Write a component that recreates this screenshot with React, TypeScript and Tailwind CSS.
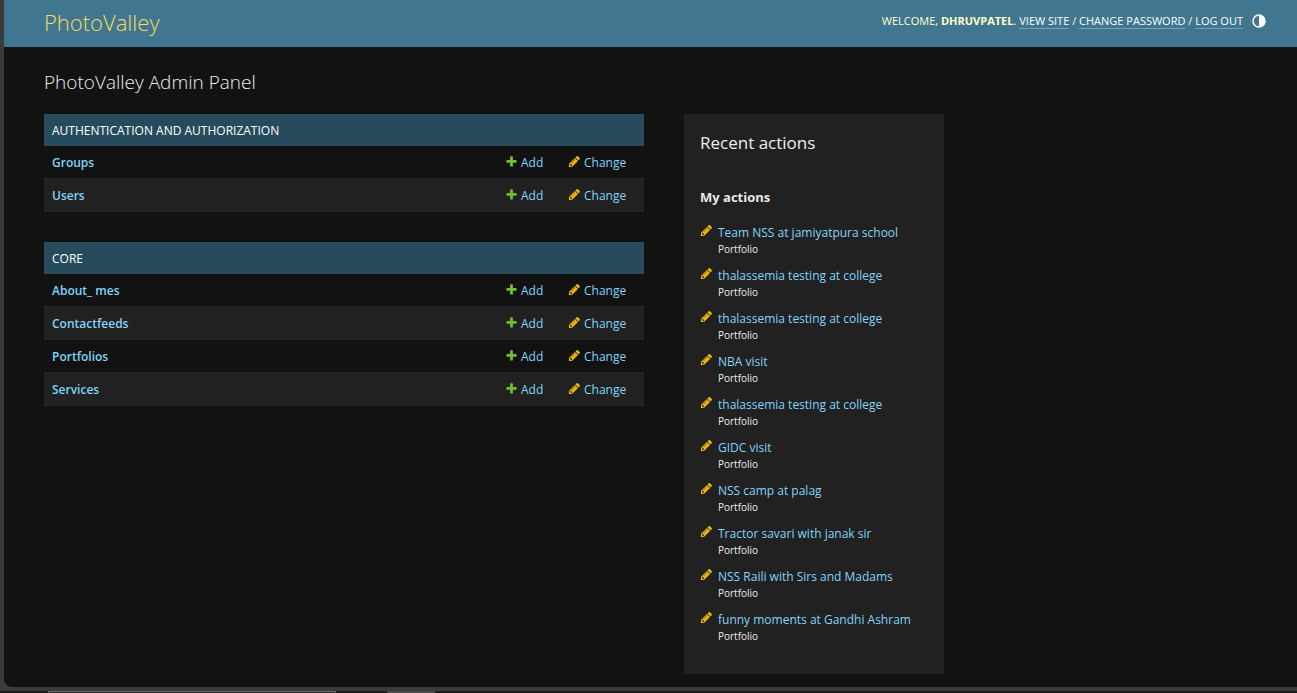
import React from "react";

type AppGroup = { name: string; models: string[] };

const groups: AppGroup[] = [
  { name: "Authentication and Authorization", models: ["Groups", "Users"] },
  { name: "Core", models: ["About_ mes", "Contactfeeds", "Portfolios", "Services"] },
];

const actions: string[] = [
  "Team NSS at jamiyatpura school",
  "thalassemia testing at college",
  "thalassemia testing at college",
  "NBA visit",
  "thalassemia testing at college",
  "GIDC visit",
  "NSS camp at palag",
  "Tractor savari with janak sir",
  "NSS Raili with Sirs and Madams",
  "funny moments at Gandhi Ashram",
];

function PlusIcon() {
  return (
    <svg className="size-[13px] shrink-0" viewBox="0 0 1792 1792" fill="#70bf2b" aria-hidden="true">
      <path d="M1600 796v192q0 40-28 68t-68 28h-416v416q0 40-28 68t-68 28h-192q-40 0-68-28t-28-68v-416h-416q-40 0-68-28t-28-68v-192q0-40 28-68t68-28h416v-416q0-40 28-68t68-28h192q40 0 68 28t28 68v416h416q40 0 68 28t28 68z" />
    </svg>
  );
}

function PencilIcon() {
  return (
    <svg className="size-[13px] shrink-0" viewBox="0 0 1792 1792" fill="#efb80b" aria-hidden="true">
      <path d="M491 1536l91-91-235-235-91 91v107h128v128h107zm523-928q0-22-22-22-10 0-17 7l-542 542q-7 7-7 17 0 22 22 22 10 0 17-7l542-542q7-7 7-17zm-54-192l416 416-832 832h-416v-416zm683 96q0 53-37 90l-166 166-416-416 166-165q36-38 90-38 53 0 91 38l235 234q37 39 37 91z" />
    </svg>
  );
}

function ThemeIcon() {
  return (
    <svg className="size-4" viewBox="0 0 16 16" aria-hidden="true">
      <circle cx="8" cy="8" r="6" fill="none" stroke="#fff" strokeWidth="1.5" />
      <path d="M8 2a6 6 0 0 1 0 12z" fill="#fff" />
    </svg>
  );
}

function Header() {
  const link = "border-b border-white/30 text-white";
  return (
    <header className="flex h-[47px] items-center justify-between bg-[#417690] pr-[30px] pl-10 text-[#ffc]">
      <a href="#home" className="pb-1 text-[22px] leading-8 font-light text-[#f5dd5d]">
        PhotoValley
      </a>
      <div className="flex items-center gap-2 pb-[5px] text-[11px] leading-[14px] uppercase">
        <div>
          Welcome, <strong className="font-bold">dhruvpatel</strong>.{" "}
          <a href="#site" className={link}>View site</a> /{" "}
          <a href="#password" className={link}>Change password</a> /{" "}
          <button type="button" className="border-b border-white/30 leading-[14px] text-white uppercase">Log out</button>
        </div>
        <button type="button" aria-label="Toggle theme">
          <ThemeIcon />
        </button>
      </div>
    </header>
  );
}

function Module({ group }: { group: AppGroup }) {
  return (
    <table className="w-full table-fixed border-separate border-spacing-0 text-left">
      <caption className="h-8 bg-[#264b5d] px-2 pt-0.5 text-left text-xs leading-[30px] text-white uppercase">
        {group.name}
      </caption>
      <colgroup>
        <col />
        <col className="w-[63px]" />
        <col className="w-[76px]" />
      </colgroup>
      <tbody>
        {group.models.map((model) => (
          <tr key={model} className="h-[33px] even:bg-[#212121]">
            <th scope="row" className="border-b border-[#272727] px-2 pt-0.5 font-semibold">
              <a href="#list">{model}</a>
            </th>
            <td className="border-b border-[#272727] pt-0.5">
              <a href="#add" className="flex items-center gap-[3px]">
                <span className="pb-1">
                  <PlusIcon />
                </span>
                Add
              </a>
            </td>
            <td className="border-b border-[#272727] pt-0.5">
              <a href="#change" className="flex items-center gap-[3px]">
                <span className="pb-1">
                  <PencilIcon />
                </span>
                Change
              </a>
            </td>
          </tr>
        ))}
      </tbody>
    </table>
  );
}

function RecentActions() {
  return (
    <aside className="w-[260px] shrink-0 bg-[#212121] pb-5">
      <h2 className="border-b border-[#272727] px-4 pt-[17px] pb-[15px] text-[17px] leading-6 text-[#eee]">Recent actions</h2>
      <h3 className="px-4 pt-[17px] pb-[18px] text-[13px] leading-[18px] font-bold text-[#e8e8e8]">My actions</h3>
      <ul className="px-4">
        {actions.map((title, i) => (
          <li key={i} className="flex h-[43px] gap-[5px]">
            <span>
              <PencilIcon />
            </span>
            <div className="whitespace-nowrap">
              <a href="#entry" className="block leading-[18px]">{title}</a>
              <span className="block text-[10px] leading-[14px] text-[#eee]">Portfolio</span>
            </div>
          </li>
        ))}
      </ul>
    </aside>
  );
}

export default function App() {
  return (
    <div className="flex min-h-screen flex-col bg-[#3b3b3b] pl-1 font-['Open_Sans','Noto_Sans',sans-serif] text-xs leading-[18px] text-[#81d4fa]">
      <div className="flex-1 overflow-hidden rounded-bl-lg bg-[#121212]">
        <Header />
        <main className="px-10 pt-5 pb-[13px]">
          <h1 className="mb-[17px] text-[19px] leading-[30px] font-light text-[#eee]">PhotoValley Admin Panel</h1>
          <div className="flex items-start gap-10">
            <div className="flex w-[600px] flex-col gap-[30px]">
              {groups.map((group) => (
                <Module key={group.name} group={group} />
              ))}
            </div>
            <RecentActions />
          </div>
        </main>
      </div>
      <div className="-ml-1 mt-1 flex h-0.5 bg-[#1e1e1e] pl-12">
        <div className="w-72 border border-b-0 border-[#666] bg-[#333]" />
        <div className="ml-[51px] w-12 bg-[#4a4a4a]" />
      </div>
    </div>
  );
}
